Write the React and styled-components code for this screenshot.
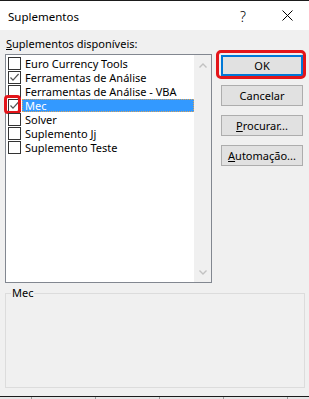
import React from 'react';
import styled, { createGlobalStyle } from 'styled-components';

const GlobalStyle = createGlobalStyle`
  html, body {
    margin: 0;
    padding: 0;
    background: #f0f0f0;
  }
  body {
    font-family: "Noto Sans", "Liberation Sans", sans-serif;
    font-size: 11px;
    color: #000;
  }
`;

const items = [
  { name: 'Euro Currency Tools', checked: false },
  { name: 'Ferramentas de Análise', checked: true },
  { name: 'Ferramentas de Análise - VBA', checked: false },
  { name: 'Mec', checked: true, selected: true },
  { name: 'Solver', checked: false },
  { name: 'Suplemento Jj', checked: false },
  { name: 'Suplemento Teste', checked: false },
];

export default function App() {
  return <>
    <GlobalStyle/>
    <Window>
      <TitleBar>
        <Title>Suplementos</Title>
        <Help>?</Help>
        <Close>
          <svg width="11" height="11" viewBox="0 0 11 11">
            <path d="M0.5 0.5 L10.5 10.5 M10.5 0.5 L0.5 10.5" stroke="#000" strokeWidth="1" fill="none"/>
          </svg>
        </Close>
      </TitleBar>
      <Body>
        <FieldLabel><u>S</u>uplementos disponíveis:</FieldLabel>
        <MainRow>
          <ListBox>
            <Items>
              {items.map(it => (
                <Row key={it.name}>
                  <CheckBox>
                    {it.checked && <svg width="11" height="11" viewBox="0 0 11 11">
                      <path d="M1.5 5.5 L4 8.2 L9.6 2" stroke="#555" strokeWidth="1.2" fill="none"/>
                    </svg>}
                    {it.selected && <Mark/>}
                  </CheckBox>
                  <ItemText selected={it.selected}>{it.name}</ItemText>
                </Row>
              ))}
            </Items>
            <ScrollBar>
              <svg width="8" height="5" viewBox="0 0 8 5">
                <path d="M0.5 4.5 L4 1 L7.5 4.5" stroke="#c2c2c2" strokeWidth="1.4" fill="none"/>
              </svg>
              <svg width="8" height="5" viewBox="0 0 8 5">
                <path d="M0.5 0.5 L4 4 L7.5 0.5" stroke="#c2c2c2" strokeWidth="1.4" fill="none"/>
              </svg>
            </ScrollBar>
          </ListBox>
          <Buttons>
            <Button primary>OK<Outline/></Button>
            <Button>Cancelar</Button>
            <Button><u>P</u>rocurar...</Button>
            <Button><u>A</u>utomação...</Button>
          </Buttons>
        </MainRow>
        <Group>
          <Legend>Mec</Legend>
        </Group>
      </Body>
      <Footer/>
    </Window>
  </>;
}

const Window = styled.div`
  width: 309px;
  height: 399px;
  box-sizing: border-box;
  border-top: 1px solid #1b1b1b;
  display: flex;
  flex-direction: column;
  background: #f0f0f0;
  overflow: hidden;
`;
const TitleBar = styled.div`
  height: 29px;
  background: #fff;
  display: flex;
  align-items: center;
  padding-left: 8px;
`;
const Title = styled.span`
  flex: 1;
  font-size: 11.5px;
  margin-top: 2px;
`;
const Help = styled.span`
  font-size: 14px;
  font-weight: 300;
  margin-right: 36px;
  margin-top: 1px;
`;
const Close = styled.span`
  width: 11px;
  height: 11px;
  margin-right: 16px;
  display: flex;
`;
const Body = styled.div`
  flex: 1;
  padding: 6px 4px 0 5px;
  display: flex;
  flex-direction: column;
`;
const FieldLabel = styled.div`
  height: 18px;
  line-height: 16px;
  margin-left: 1px;
`;
const MainRow = styled.div`
  display: flex;
  align-items: flex-start;
  gap: 9px;
`;
const ListBox = styled.div`
  width: 207px;
  height: 229px;
  box-sizing: border-box;
  border: 1px solid #828790;
  background: #fff;
  display: flex;
`;
const Items = styled.div`
  flex: 1;
  padding-top: 1px;
`;
const Row = styled.div`
  height: 14px;
  display: flex;
  align-items: center;
  padding-left: 2px;
`;
const CheckBox = styled.span`
  position: relative;
  width: 13px;
  height: 13px;
  box-sizing: border-box;
  border: 1px solid #333;
  background: #fff;
  display: flex;
  align-items: center;
  justify-content: center;
`;
const Mark = styled.span`
  position: absolute;
  left: -5px;
  top: -5px;
  width: 17px;
  height: 19px;
  box-sizing: border-box;
  border: 3px solid #e3151a;
  border-radius: 4px;
`;
const ItemText = styled.span`
  flex: 1;
  margin-left: 1px;
  padding-left: 3px;
  height: 13px;
  line-height: 13px;
  box-sizing: border-box;
  white-space: nowrap;
  background: ${p => p.selected ? '#3399ff' : 'transparent'};
  color: ${p => p.selected ? '#fff' : '#000'};
  outline: ${p => p.selected ? '1px dotted #d9a35a' : 'none'};
  outline-offset: -1px;
`;
const ScrollBar = styled.div`
  width: 17px;
  background: #f0f0f0;
  display: flex;
  flex-direction: column;
  align-items: center;
  justify-content: space-between;
  padding: 8px 0 7px;
  box-sizing: border-box;
`;
const Buttons = styled.div`
  display: flex;
  flex-direction: column;
  gap: 9px;
  margin-top: 1px;
`;
const Button = styled.div`
  position: relative;
  width: 82px;
  height: 21px;
  box-sizing: border-box;
  background: #e1e1e1;
  border: 1px solid ${p => p.primary ? '#0078d7' : '#adadad'};
  box-shadow: ${p => p.primary ? 'inset 0 0 0 1px #0078d7' : 'none'};
  display: flex;
  align-items: center;
  justify-content: center;
  line-height: 14px;
`;
const Outline = styled.span`
  position: absolute;
  left: -6px;
  top: -6px;
  right: -4px;
  bottom: -4px;
  border: 3px solid #e3151a;
  border-radius: 5px;
`;
const Group = styled.fieldset`
  margin: 4px 0 0;
  padding: 0;
  height: 101px;
  box-sizing: border-box;
  border: 1px solid #dcdcdc;
  min-width: 0;
`;
const Legend = styled.legend`
  margin-left: 5px;
  padding: 0 1px;
  line-height: 12px;
  font-size: 11px;
`;
const Footer = styled.div`
  height: 2px;
  flex-shrink: 0;
  border-top: 1px solid #1b1b1b;
  background: repeating-linear-gradient(to right, #e4e4e4 0, #e4e4e4 31px, #9a9a9a 31px, #9a9a9a 32px, #e4e4e4 32px, #e4e4e4 64px);
`;
